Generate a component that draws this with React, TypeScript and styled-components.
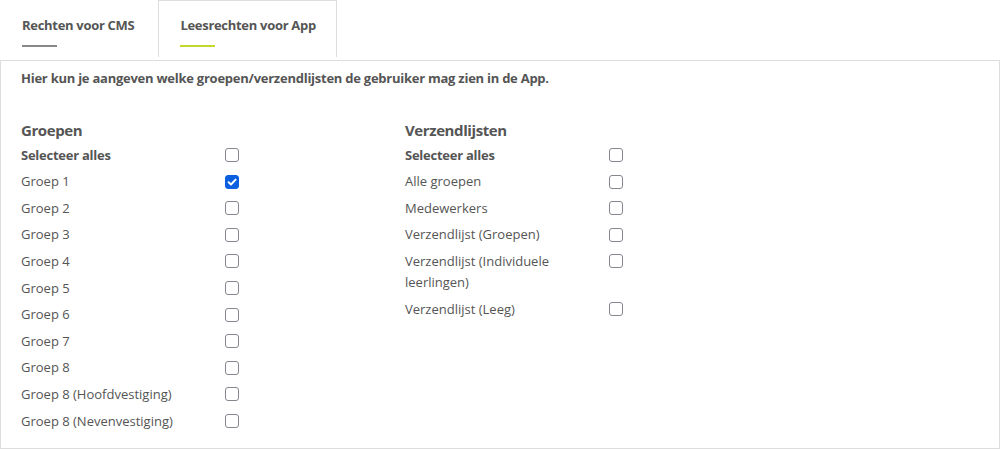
import React, { useState } from 'react'
import styled, { createGlobalStyle } from 'styled-components'

const GlobalStyle = createGlobalStyle`
  body {
    margin: 0;
    background: #fff;
    font-family: 'Open Sans', 'Noto Sans', sans-serif;
    color: #555;
  }
`

const Page = styled.div`
  width: 1000px;
  height: 449px;
  box-sizing: border-box;
`

const TabBar = styled.div`
  display: flex;
  height: 57px;
`

const Tab = styled.div<{ $active?: boolean }>`
  box-sizing: border-box;
  padding: 16px ${({ $active }) => ($active ? '20px' : '23px')} 0 21px;
  border: 1px solid ${({ $active }) => ($active ? '#ddd' : 'transparent')};
  border-bottom: none;
  background: #fff;
  font-size: 13px;
  font-weight: 700;
  letter-spacing: -0.3px;
  line-height: 17px;
  color: #555;
  cursor: pointer;

  &::after {
    content: '';
    display: block;
    width: 35px;
    height: 2px;
    margin-top: 11px;
    background: ${({ $active }) => ($active ? '#c3d82b' : '#888')};
  }
`

const Panel = styled.div`
  margin-top: 3px;
  height: 389px;
  box-sizing: border-box;
  border: 1px solid #ddd;
  padding: 9px 20px 0;
`

const Intro = styled.p`
  margin: 0;
  font-size: 13px;
  font-weight: 700;
  letter-spacing: -0.25px;
  line-height: 17px;
  color: #555;
`

const Columns = styled.div`
  display: grid;
  grid-template-columns: 384px 384px;
  margin-top: 33px;
`

const Column = styled.div`
  display: flex;
  flex-direction: column;
  gap: 5.6px;
`

const Heading = styled.h3`
  margin: 0 0 -1px;
  font-size: 15px;
  font-weight: 700;
  letter-spacing: -0.4px;
  line-height: 20px;
  color: #555;
`

const Row = styled.label`
  display: grid;
  grid-template-columns: 204px 14px;
  font-size: 13px;
  line-height: 21px;
  cursor: pointer;
`

const Label = styled.span<{ $bold?: boolean }>`
  font-weight: ${({ $bold }) => ($bold ? 700 : 400)};
  letter-spacing: ${({ $bold }) => ($bold ? '-0.25px' : '0')};
`

const Box = styled.span<{ $checked?: boolean }>`
  box-sizing: border-box;
  width: 14px;
  height: 14px;
  margin-top: 3.5px;
  border: 1px solid ${({ $checked }) => ($checked ? '#0a5fe0' : '#868691')};
  border-radius: 3px;
  background: ${({ $checked }) => ($checked ? '#0a5fe0' : '#fff')};
  display: flex;
  align-items: center;
  justify-content: center;
`

interface Item {
  label: string
  bold?: boolean
}

const groepen: Item[] = [
  { label: 'Selecteer alles', bold: true },
  { label: 'Groep 1' },
  { label: 'Groep 2' },
  { label: 'Groep 3' },
  { label: 'Groep 4' },
  { label: 'Groep 5' },
  { label: 'Groep 6' },
  { label: 'Groep 7' },
  { label: 'Groep 8' },
  { label: 'Groep 8 (Hoofdvestiging)' },
  { label: 'Groep 8 (Nevenvestiging)' },
]

const lijsten: Item[] = [
  { label: 'Selecteer alles', bold: true },
  { label: 'Alle groepen' },
  { label: 'Medewerkers' },
  { label: 'Verzendlijst (Groepen)' },
  { label: 'Verzendlijst (Individuele leerlingen)' },
  { label: 'Verzendlijst (Leeg)' },
]

const Check: React.FC<{ checked: boolean; onToggle: () => void }> = ({
  checked,
  onToggle,
}) => (
  <Box $checked={checked} onClick={onToggle}>
    {checked && (
      <svg width="10" height="10" viewBox="0 0 10 10">
        <path
          d="M1.6 5.2 L4 7.5 L8.6 2.6"
          fill="none"
          stroke="#fff"
          strokeWidth="1.9"
          strokeLinecap="round"
          strokeLinejoin="round"
        />
      </svg>
    )}
  </Box>
)

const CheckList: React.FC<{ title: string; items: Item[]; initial: string[] }> = ({
  title,
  items,
  initial,
}) => {
  const [checked, setChecked] = useState<string[]>(initial)
  const toggle = (label: string) =>
    setChecked((c) => (c.includes(label) ? c.filter((l) => l !== label) : [...c, label]))

  return (
    <Column>
      <Heading>{title}</Heading>
      {items.map((item) => (
        <Row key={item.label}>
          <Label $bold={item.bold}>{item.label}</Label>
          <Check checked={checked.includes(item.label)} onToggle={() => toggle(item.label)} />
        </Row>
      ))}
    </Column>
  )
}

export default function App() {
  return (
    <Page>
      <GlobalStyle />
      <TabBar>
        <Tab>Rechten voor CMS</Tab>
        <Tab $active>Leesrechten voor App</Tab>
      </TabBar>
      <Panel>
        <Intro>
          Hier kun je aangeven welke groepen/verzendlijsten de gebruiker mag zien in de App.
        </Intro>
        <Columns>
          <CheckList title="Groepen" items={groepen} initial={['Groep 1']} />
          <CheckList title="Verzendlijsten" items={lijsten} initial={[]} />
        </Columns>
      </Panel>
    </Page>
  )
}
